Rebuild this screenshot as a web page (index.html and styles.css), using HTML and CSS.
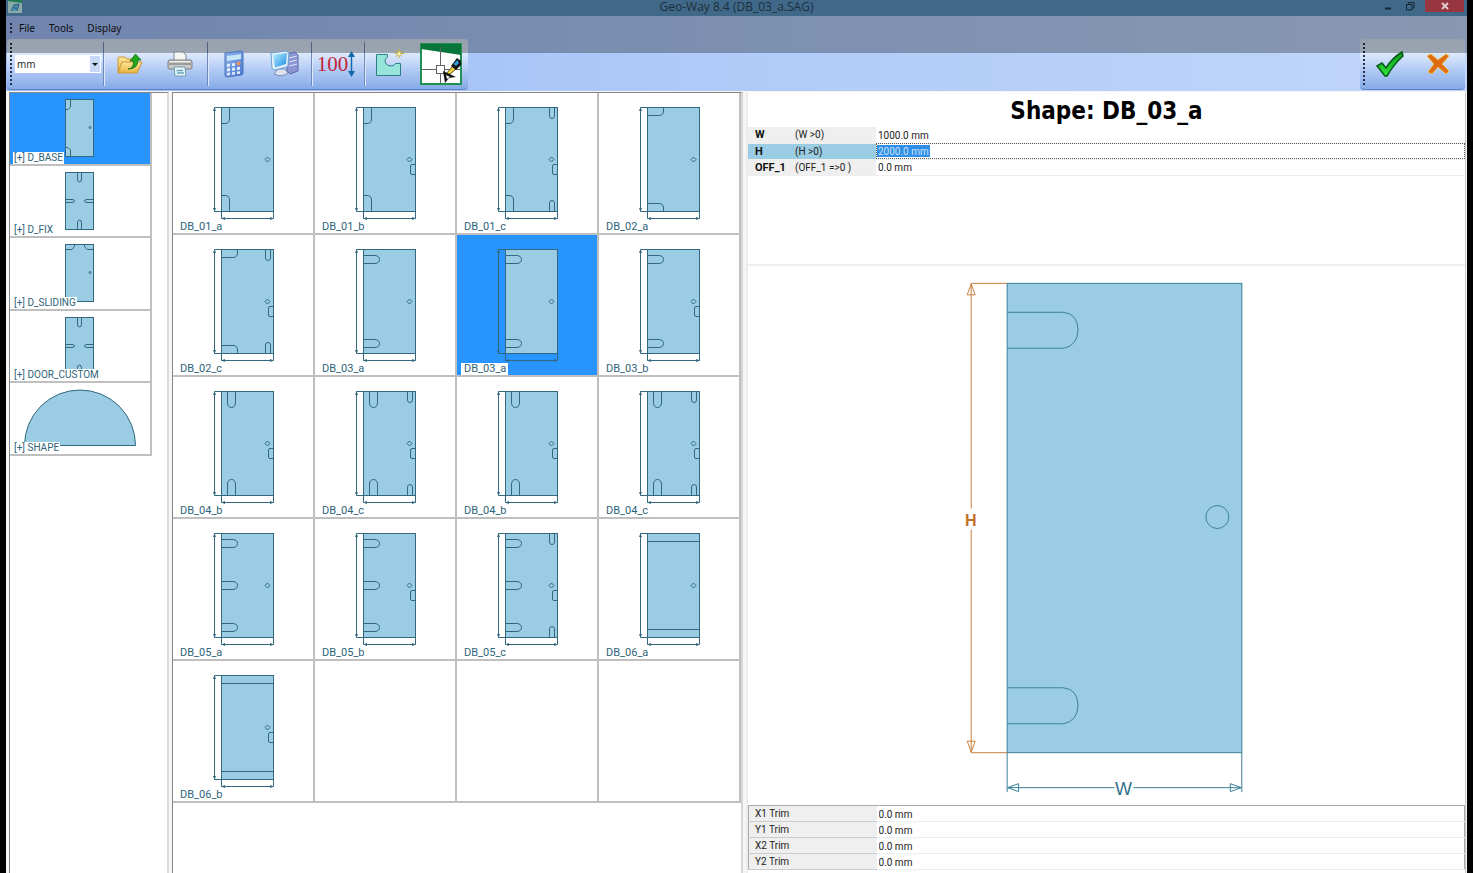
FILE: index.html
```html
<!DOCTYPE html>
<html lang="en">
<head>
<meta charset="utf-8">
<title>Geo-Way 8.4 (DB_03_a.SAG)</title>
<link rel="stylesheet" href="styles.css">
</head>
<body>
<svg class="defs" width="0" height="0" aria-hidden="true">
  <defs>
    <linearGradient id="gFolder" x1="0" y1="0" x2="0" y2="1"><stop offset="0" stop-color="#ffe79a"/><stop offset="1" stop-color="#e9b440"/></linearGradient>
    <linearGradient id="gScreen" x1="0" y1="0" x2="1" y2="1"><stop offset="0" stop-color="#b5f0ff"/><stop offset="1" stop-color="#1e8be6"/></linearGradient>
    <linearGradient id="gCheck" x1="0" y1="0" x2="0" y2="1"><stop offset="0" stop-color="#0c9a1c"/><stop offset="1" stop-color="#2fe33c"/></linearGradient>
    <linearGradient id="gCalc" x1="0" y1="0" x2="1" y2="1"><stop offset="0" stop-color="#8fb4ec"/><stop offset="1" stop-color="#4a78cf"/></linearGradient>
    <g id="door">
      <rect class="glass" x="48.5" y="14.5" width="52" height="104"/>
      <path d="M48.5 14.5H41.5V118.5H48.5M48.5 118.5V125.5H100.5V118.5"/>
      <path class="tip" d="M40 18l1.500-4 1.500 4zM40 115l1.500 4 1.500-4zM52 124l-4 1.500 4 1.500zM97 124l4 1.500-4 1.500z"/>
    </g>
    <path id="corner" d="M56.500 14.500V26Q56.500 30.500 52 30.500H48.500M48.500 102.500H52Q56.500 102.500 56.500 107V118.500"/>
    <path id="cornerWide" d="M64.500 14.500V18Q64.500 22.500 60 22.500H48.500M48.500 110.500H60Q64.500 110.500 64.500 115V118.500"/>
    <path id="slots" d="M48.500 20.500H60Q64.500 21 64.500 24.500Q64.500 28 60 28.500H48.500M48.500 104.500H60Q64.500 105 64.500 108.500Q64.500 112 60 112.500H48.500"/>
    <path id="midSlot" d="M48.500 62.500H60Q64.500 63 64.500 66.500Q64.500 70 60 70.500H48.500"/>
    <path id="upSlots" d="M54.500 14.500V26Q55 30.500 58.500 30.500Q62 30.500 62.500 26V14.500M54.500 118.500V107Q55 102.500 58.500 102.500Q62 102.500 62.500 107V118.500"/>
    <path id="pins" d="M92.500 14.500V23Q92.500 25.500 95 25.500Q97.500 25.500 97.500 23V14.500M92.500 118.500V110Q92.500 107.500 95 107.500Q97.500 107.500 97.500 110V118.500"/>
    <path id="knob" d="M94.500 64l2.500 2.500-2.500 2.500-2.500-2.500z"/>
    <path id="lock" d="M100.500 71.500H97Q95.500 71.500 95.500 73V80Q95.500 81.500 97 81.500H100.500"/>
    <path id="rails" d="M48.500 22.500H100.500M48.500 110.500H100.500"/>
    <rect id="leaf" class="glass" x="55.500" y="6.500" width="28" height="57"/>
    <path id="cross" d="M67.500 6.500V13Q67.500 16 69.500 16Q71.500 16 71.500 13V6.500M67.500 63.500V57Q67.500 54 69.500 54Q71.500 54 71.500 57V63.500M55.500 33.500H62Q64.500 33.500 64.500 35Q64.500 36.500 62 36.500H55.500M83.500 33.500H77Q74.500 33.500 74.500 35Q74.500 36.500 77 36.500H83.500"/>
  </defs>
</svg>

<div class="window">
  <header class="chrome">
    <div class="titlebar">
      <svg class="app-icon" viewBox="0 0 14 13" aria-hidden="true"><rect width="14" height="13" fill="#8ba9a8"/><path d="M0 0H14V3L0 1z" fill="#1d7a50"/><path d="M3 11L6 5L11 4L9 11M6 8h3" fill="#4d8fae" stroke="#275f75"/></svg>
      <h1 class="app-title">Geo-Way 8.4 (DB_03_a.SAG)</h1>
      <div class="win-buttons">
        <button class="win-btn" aria-label="Minimize"><svg width="10" height="10"><path d="M2 7.500H8" stroke="#14262f" stroke-width="2"/></svg></button>
        <button class="win-btn" aria-label="Restore"><svg width="10" height="10"><path d="M1.500 3.500H7V9H1.500zM3.500 3V1.500H9V7H7.500" fill="none" stroke="#14262f"/></svg></button>
        <button class="win-btn win-close" aria-label="Close"><svg width="10" height="10"><path d="M2 2L8 8M8 2L2 8" stroke="#e2c9cd" stroke-width="2"/></svg></button>
      </div>
    </div>
    <div class="bars">
      <nav class="menubar"><span class="grip"></span><button class="menu">File</button><button class="menu">Tools</button><button class="menu">Display</button></nav>
      <div class="toolrow">
        <div class="toolbar" role="toolbar" aria-label="Tools">
          <span class="grip"></span>
          <div class="unit"><select aria-label="Unit"><option>mm</option></select><span class="unit-arrow"></span></div>
          <span class="sep"></span>
          <button class="tool" aria-label="Open"><svg width="28" height="24" viewBox="0 0 28 24"><path d="M2 20V6q0-1 1-1h6l2 2h9v3" fill="url(#gFolder)" stroke="#c89632"/><path d="M2 21L6 10H26L21 21Z" fill="url(#gFolder)" stroke="#c89632"/><path d="M12 17q6-1 5.500-8H14l5.500-7L25 8h-3q0 9-10 9z" fill="#22a81c" stroke="#12701a" stroke-width=".8"/></svg></button>
          <button class="tool" aria-label="Print"><svg width="28" height="26" viewBox="0 0 28 26"><path d="M8 9V1h9l3 3v5" fill="#f6f6f2" stroke="#7d8592"/><rect x="2" y="9" width="24" height="9" rx="2" fill="#c9c9c7" stroke="#7b7b7b"/><path d="M3 13H25" stroke="#727272"/><path d="M4 10.500H24" stroke="#efefef"/><path d="M8 16H19L20 25H9z" fill="#e9f5fa" stroke="#6f9cab"/><path d="M10.500 19.500H17M11 22H18" stroke="#65a5bf" stroke-width="1.500"/></svg></button>
          <span class="sep"></span>
          <button class="tool" aria-label="Calculator"><svg width="22" height="28" viewBox="0 0 22 28"><path d="M2 3L18 1Q20 1 20 3V23Q20 25 18 25L4 27Q2 27 2 25z" fill="url(#gCalc)" stroke="#4a72bd"/><path d="M4 6L18 4V9L4 11z" fill="#c6e7f8"/><g fill="#e2ecff"><path d="M4 14l3-.4v3l-3 .4zM9 13.300l3-.4v3l-3 .4zM4 18.500l3-.4v3l-3 .4zM9 17.800l3-.4v3l-3 .4zM14 17.100l3-.4v3l-3 .4zM4 23l3-.4v2.500l-3 .4zM9 22.300l3-.4v2.500l-3 .4zM14 21.600l3-.4v2.500l-3 .4z"/></g><circle cx="15.500" cy="13.500" r="2" fill="#ef9160"/></svg></button>
          <button class="tool" aria-label="Transfer to machine"><svg width="30" height="28" viewBox="0 0 30 28"><path d="M18 4L26 2L29 5V21L21 24L18 21z" fill="#8b96d2" stroke="#5d69ab"/><path d="M20 8l8-2M20 12l8-2M20 16l8-2" stroke="#dfe4fb"/><path d="M9 19h7l3 4q-6 5-14 1z" fill="#dbe3f1" stroke="#788bb0"/><path d="M2 3L17 1L20 3L19 15Q19 17 17 17L6 20Q3 20 3 18z" fill="#e6f2fb" stroke="#6a9fd4"/><path d="M4 5L18 3L17 14L6 17.500z" fill="url(#gScreen)"/></svg></button>
          <span class="sep"></span>
          <button class="tool tool-narrow" aria-label="Dimensions 100"><span class="hundred">100</span><svg width="7" height="26" viewBox="0 0 7 26"><path d="M3.500 4V22" stroke="#1467a8" stroke-width="1.500"/><path d="M0 6L3.500 0L7 6zM0 20L3.500 26L7 20z" fill="#1467a8"/></svg></button>
          <span class="sep sep-wide"></span>
          <button class="tool tool-narrow" aria-label="New shape"><svg width="30" height="32" viewBox="0 0 30 32"><path d="M2.500 6.500H13.500V9Q10.500 11 11 14Q12.500 18 17 18Q20 18 21.500 15.500H26.500V27.500H2.500Z" fill="#96e4da" stroke="#2c7f87"/><path d="M25 1V10M21 5.500H30M22 2.500L28 8.500M28 2.500L22 8.500" stroke="#c8ad20"/><circle cx="25" cy="5.500" r="1.500" fill="#fff6a6"/></svg></button>
          <button class="tool-logo" aria-label="Drawing editor"><svg width="42" height="42" viewBox="0 0 42 42"><rect x="1" y="1" width="40" height="40" fill="#fff" stroke="#219052" stroke-width="2"/><path d="M1 1H41V12L1 6z" fill="#08763b"/><path d="M2 26.500H16M24 26.500H40M20.500 4V22M20.500 30V40" stroke="#626262"/><rect x="16.500" y="22.500" width="8" height="8" fill="none" stroke="#626262"/><path d="M25 32L33 23L36 26L30 31z" fill="#f0d342" stroke="#5f5415"/><path d="M31 23L37 15L41 18V22L36 27z" fill="#111"/><path d="M33.500 21L37.500 17L39 20L36 23z" fill="#2f9fd8"/><path d="M23 28L36 34L29 35L25 40z" fill="#111"/><path d="M26 32l4 2-3 2z" fill="#fff"/></svg></button>
        </div>
        <div class="toolbar toolbar-end" role="toolbar" aria-label="Confirm">
          <span class="grip"></span>
          <button class="tool" aria-label="Accept"><svg width="30" height="28" viewBox="0 0 30 28"><path d="M2 16L7 13L11 18Q17 8 27 2L28 6Q19 14 12 26H10Z" fill="url(#gCheck)" stroke="#075b16" stroke-width="1.500"/></svg></button>
          <button class="tool tool-narrow" aria-label="Cancel"><svg width="26" height="24" viewBox="0 0 26 24"><path d="M2 4L6 2L13 8L21 2L24 4L17 12L24 19L21 22L13 15L7 22L3 20L9 12Z" fill="#df6b10" stroke="#f3b83c" stroke-width="1"/></svg></button>
        </div>
      </div>
    </div>
  </header>

  <main class="work">
    <section class="panel families" aria-label="Shape families">
      <div class="family-list">
        <button class="family is-on"><svg class="art" viewBox="0 0 140 70"><use href="#leaf"/><path d="M60.500 6.500V14L58 16.500H55.500M55.500 54.500H58L60.500 57V63.500"/><circle cx="80" cy="34.500" r="1"/></svg><span class="tag">[+] D_BASE</span></button>
        <button class="family"><svg class="art" viewBox="0 0 140 70"><use href="#leaf"/><use href="#cross"/></svg><span class="tag">[+] D_FIX</span></button>
        <button class="family"><svg class="art" viewBox="0 0 140 70"><use href="#leaf"/><path d="M64.500 6.500V8.500L62 11.500H55.500M74.500 6.500V8.500L77 11.500H83.500"/><circle cx="80" cy="34.500" r="1"/></svg><span class="tag">[+] D_SLIDING</span></button>
        <button class="family"><svg class="art" viewBox="0 0 140 70"><use href="#leaf"/><use href="#cross"/></svg><span class="tag">[+] DOOR_CUSTOM</span></button>
        <button class="family"><svg class="art" viewBox="0 0 140 70"><path class="glass" d="M14.500 62.500A55.500 55.500 0 0 1 125.500 62.500Z"/></svg><span class="tag">[+] SHAPE</span></button>
      </div>
    </section>

    <section class="panel shapes" aria-label="Shapes">
      <div class="shape-grid">
        <button class="shape"><svg class="art" viewBox="0 0 140 140"><use href="#door"/><use href="#corner"/><use href="#knob"/></svg><span class="tag">DB_01_a</span></button>
        <button class="shape"><svg class="art" viewBox="0 0 140 140"><use href="#door"/><use href="#corner"/><use href="#knob"/><use href="#lock"/></svg><span class="tag">DB_01_b</span></button>
        <button class="shape"><svg class="art" viewBox="0 0 140 140"><use href="#door"/><use href="#corner"/><use href="#pins"/><use href="#knob"/><use href="#lock"/></svg><span class="tag">DB_01_c</span></button>
        <button class="shape"><svg class="art" viewBox="0 0 140 140"><use href="#door"/><use href="#cornerWide"/><use href="#knob"/></svg><span class="tag">DB_02_a</span></button>

        <button class="shape"><svg class="art" viewBox="0 0 140 140"><use href="#door"/><use href="#cornerWide"/><use href="#pins"/><use href="#knob"/><use href="#lock"/></svg><span class="tag">DB_02_c</span></button>
        <button class="shape"><svg class="art" viewBox="0 0 140 140"><use href="#door"/><use href="#slots"/><use href="#knob"/></svg><span class="tag">DB_03_a</span></button>
        <button class="shape is-on"><svg class="art" viewBox="0 0 140 140"><use href="#door"/><use href="#slots"/><use href="#knob"/></svg><span class="tag">DB_03_a</span></button>
        <button class="shape"><svg class="art" viewBox="0 0 140 140"><use href="#door"/><use href="#slots"/><use href="#knob"/><use href="#lock"/></svg><span class="tag">DB_03_b</span></button>

        <button class="shape"><svg class="art" viewBox="0 0 140 140"><use href="#door"/><use href="#upSlots"/><use href="#knob"/><use href="#lock"/></svg><span class="tag">DB_04_b</span></button>
        <button class="shape"><svg class="art" viewBox="0 0 140 140"><use href="#door"/><use href="#upSlots"/><use href="#pins"/><use href="#knob"/><use href="#lock"/></svg><span class="tag">DB_04_c</span></button>
        <button class="shape"><svg class="art" viewBox="0 0 140 140"><use href="#door"/><use href="#upSlots"/><use href="#knob"/><use href="#lock"/></svg><span class="tag">DB_04_b</span></button>
        <button class="shape"><svg class="art" viewBox="0 0 140 140"><use href="#door"/><use href="#upSlots"/><use href="#pins"/><use href="#knob"/><use href="#lock"/></svg><span class="tag">DB_04_c</span></button>

        <button class="shape"><svg class="art" viewBox="0 0 140 140"><use href="#door"/><use href="#slots"/><use href="#midSlot"/><use href="#knob"/></svg><span class="tag">DB_05_a</span></button>
        <button class="shape"><svg class="art" viewBox="0 0 140 140"><use href="#door"/><use href="#slots"/><use href="#midSlot"/><use href="#knob"/><use href="#lock"/></svg><span class="tag">DB_05_b</span></button>
        <button class="shape"><svg class="art" viewBox="0 0 140 140"><use href="#door"/><use href="#slots"/><use href="#midSlot"/><use href="#pins"/><use href="#knob"/><use href="#lock"/></svg><span class="tag">DB_05_c</span></button>
        <button class="shape"><svg class="art" viewBox="0 0 140 140"><use href="#door"/><use href="#rails"/><use href="#knob"/></svg><span class="tag">DB_06_a</span></button>

        <button class="shape"><svg class="art" viewBox="0 0 140 140"><use href="#door"/><use href="#rails"/><use href="#knob"/><use href="#lock"/></svg><span class="tag">DB_06_b</span></button>
        <div class="shape"></div>
        <div class="shape"></div>
        <div class="shape"></div>
      </div>
    </section>

    <section class="detail" aria-label="Shape detail">
      <div class="params-area">
        <h2 class="shape-title">Shape: DB_03_a</h2>
        <table class="props params">
          <tr><th scope="row"><label for="pW">W</label></th><td class="rule">(W &gt;0)</td><td class="value"><input id="pW" value="1000.0 mm"></td></tr>
          <tr class="is-current"><th scope="row"><label for="pH">H</label></th><td class="rule">(H &gt;0)</td><td class="value"><input id="pH" class="marked" value="2000.0 mm"></td></tr>
          <tr><th scope="row"><label for="pO">OFF_1</label></th><td class="rule">(OFF_1 =&gt;0 )</td><td class="value"><input id="pO" value="0.0 mm"></td></tr>
        </table>
      </div>
      <div class="preview">
        <svg class="drawing" viewBox="748 266 718 538" role="img" aria-label="Door DB_03_a with dimensions H and W">
          <rect class="glass" x="1007.500" y="282.500" width="235" height="470"/>
          <path d="M1007.500 311.500H1064Q1078 313 1078.500 329Q1078 345 1064 347.500H1007.500M1007.500 687.500H1064Q1078 689 1078.500 705Q1078 721 1064 723.500H1007.500"/>
          <circle cx="1218" cy="516.500" r="11.500"/>
          <path d="M1007.500 752.500V792M1242.500 752.500V792M1008 787.500H1115M1134 787.500H1242M1008 787.500L1019 783.500V791.500ZM1242 787.500L1231 783.500V791.500Z"/>
          <path class="active" d="M1007.500 282.500H971.500V508M971.500 529V752.500H1007.500M971.500 283L967.500 294H975.500ZM971.500 752L967.500 741H975.500Z"/>
          <text class="dim" x="1124" y="795">W</text>
          <text class="dim dim-active" x="971" y="525">H</text>
        </svg>
      </div>
      <table class="props trims">
        <tr><th scope="row"><label for="x1">X1 Trim</label></th><td class="value"><input id="x1" value="0.0 mm"></td></tr>
        <tr><th scope="row"><label for="y1">Y1 Trim</label></th><td class="value"><input id="y1" value="0.0 mm"></td></tr>
        <tr><th scope="row"><label for="x2">X2 Trim</label></th><td class="value"><input id="x2" value="0.0 mm"></td></tr>
        <tr><th scope="row"><label for="y2">Y2 Trim</label></th><td class="value"><input id="y2" value="0.0 mm"></td></tr>
      </table>
    </section>
  </main>
</div>
</body>
</html>
```
FILE: styles.css
```css
* { box-sizing: border-box; }
body {
  margin: 0;
  background: #000;
  font-family: Roboto, "Liberation Sans", sans-serif;
  font-size: 11px;
  color: #222;
}
button, input, select { font: inherit; color: inherit; border: 0; padding: 0; background: none; }
.defs { position: absolute; }
.window {
  display: flex;
  flex-direction: column;
  height: 100vh;
  margin: 0 6px;
  background: #f6f6f6;
}

/* window chrome */
.titlebar {
  display: grid;
  grid-template-columns: 1fr auto 1fr;
  height: 16px;
  background: #3f6889;
}
.app-icon { width: 14px; height: 13px; margin-left: 2px; }
.app-title {
  margin: 0;
  font: 12px/14px "Open Sans", sans-serif;
  color: #1d2f3b;
}
.win-buttons { display: flex; justify-content: flex-end; margin-right: 3px; }
.win-btn { width: 22px; height: 12px; line-height: 0; }
.win-close { width: 39px; margin-left: 4px; background: #97363f; }
.bars {
  position: relative;
  background: linear-gradient(90deg, #9ebbf7, #b0cbf8 50%, #c1d6fa);
}
.bars::after {
  content: "";
  position: absolute;
  inset: 0 0 auto;
  height: 37px;
  background: rgb(0 0 0 / 29%);
  pointer-events: none;
}
.menubar {
  display: flex;
  align-items: center;
  height: 23px;
  padding-left: 4px;
  font-family: "Noto Sans", sans-serif;
  font-size: 10px;
  color: #111;
}
.menubar .grip { height: 10px; margin-right: 7px; }
.menu { margin-right: 14px; }
.grip {
  width: 2px;
  height: 42px;
  background: repeating-linear-gradient(#26344f 0 2px, transparent 2px 4px);
}
.toolrow { display: flex; justify-content: space-between; height: 52px; padding: 0 2px 0 1px; }
.toolbar {
  display: flex;
  align-items: center;
  height: 51px;
  padding: 0 6px 0 3px;
  border-radius: 4px;
  border-bottom: 1px solid #5d83c4;
  background: linear-gradient(#d6e2f3, #dce8fc 30%, #b4ccf5 60%, #86aae8);
}
.toolbar-end { padding-right: 4px; }
.unit { position: relative; width: 86px; height: 18px; margin-left: 3px; }
.unit select {
  appearance: none;
  width: 86px;
  height: 18px;
  padding-left: 2px;
  background: #fff;
  font-family: "Open Sans", sans-serif;
  font-size: 10px;
}
.unit-arrow {
  position: absolute;
  inset: 1px 1px 1px auto;
  width: 10px;
  background: #c6d9f6;
  pointer-events: none;
}
.unit-arrow::after {
  content: "";
  position: absolute;
  left: 2px;
  top: 7px;
  border: 3px solid transparent;
  border-top-color: #111;
}
.sep { width: 2px; height: 44px; margin-left: 2px; background: linear-gradient(90deg, #7089b5 50%, #dde8fb 50%); }
.sep-wide { margin-left: 5px; }
.tool, .tool-logo { position: relative; z-index: 1; }
.tool { display: flex; align-items: center; justify-content: center; width: 50px; height: 44px; }
.tool-narrow { width: 46px; }
.tool-logo { width: 42px; height: 42px; margin-left: 8px; }
.hundred { font: 21px "Liberation Serif", serif; color: #c32638; }

/* work area */
.work {
  flex: 1;
  min-height: 0;
  display: grid;
  grid-template-columns: 160px 571px 1fr;
  column-gap: 3px;
  padding: 1px 1px 0 3px;
}
.panel { background: #fff; border: 1px solid #858585; border-width: 1px 0 0 1px; }
.families { border-right: 2px solid #dcdcdc; }
.shapes { border-right: 2px solid #d6d6d6; }
.family-list { display: grid; grid-template-rows: repeat(5, 1fr); width: 142px; height: 363px; }
.family, .shape {
  position: relative;
  background: #fff;
  border: solid #bfbfbf;
  border-width: 0 2px 2px 0;
  text-align: left;
}
.family.is-on, .shape.is-on { background: #2894ff; }
.shape-grid { display: grid; grid-template-columns: repeat(4, 142px); grid-auto-rows: 142px; margin-right: -2px; }
.art { position: absolute; left: 0; top: 0; width: 140px; fill: none; stroke: #33687e; }
.glass { fill: #9acde3; }
.tip { fill: #33687e; stroke: none; }
.tag {
  position: absolute;
  left: 4px;
  bottom: 0;
  padding: 0 2px 0 3px;
  background: #fff;
  color: #2f6479;
  line-height: 12px;
}
.family .tag { left: 3px; padding: 0 1px; font-size: 10px; }

/* detail pane */
.detail { display: flex; flex-direction: column; min-width: 0; background: #fff; border-left: 2px solid #ececec; border-right: 1px solid #c8c8c8; }
.params-area { height: 174px; border-bottom: 2px solid #eee; }
.shape-title {
  margin: 0;
  padding: 5px 0 1px;
  font: bold 24px/29px "DejaVu Sans Condensed", "DejaVu Sans", sans-serif;
  color: #000;
  text-align: center;
}
.props { width: 100%; border-collapse: collapse; table-layout: fixed; font-size: 10px; }
.props tr { height: 16px; }
.props th, .props td { padding: 0; line-height: 15px; border-bottom: 1px solid #eee; }
.props th { width: 128px; padding-left: 6px; text-align: left; font-weight: normal; background: #efefef; }
.params th { width: 47px; padding-left: 7px; font-size: 11px; font-weight: bold; color: #111; }
.params .rule { width: 81px; background: #efefef; }
.params .is-current th, .params .is-current .rule { background: #9acde3; }
.params .is-current .value { outline: 1px dotted #555; outline-offset: -1px; }
.value input { display: block; width: 100%; height: 15px; padding: 1px 0 0 2px; }
.value .marked { width: 53px; height: 12px; margin-left: 1px; padding: 0 0 0 1px; background: #2f8fe6; color: #c9e4fa; }
.preview { flex: 1; min-height: 0; }
.drawing { display: block; width: 100%; height: 100%; fill: none; stroke: #3b7f99; }
.active { stroke: #c8813f; }
.dim { fill: #34718a; stroke: none; font: 18px "Liberation Sans", sans-serif; text-anchor: middle; }
.dim-active { fill: #c56f27; font-size: 16px; font-weight: bold; }
.trims { border: 1px solid #a9a9a9; margin-bottom: 3px; }
.trims th { border-bottom-color: #ccc; }
```
